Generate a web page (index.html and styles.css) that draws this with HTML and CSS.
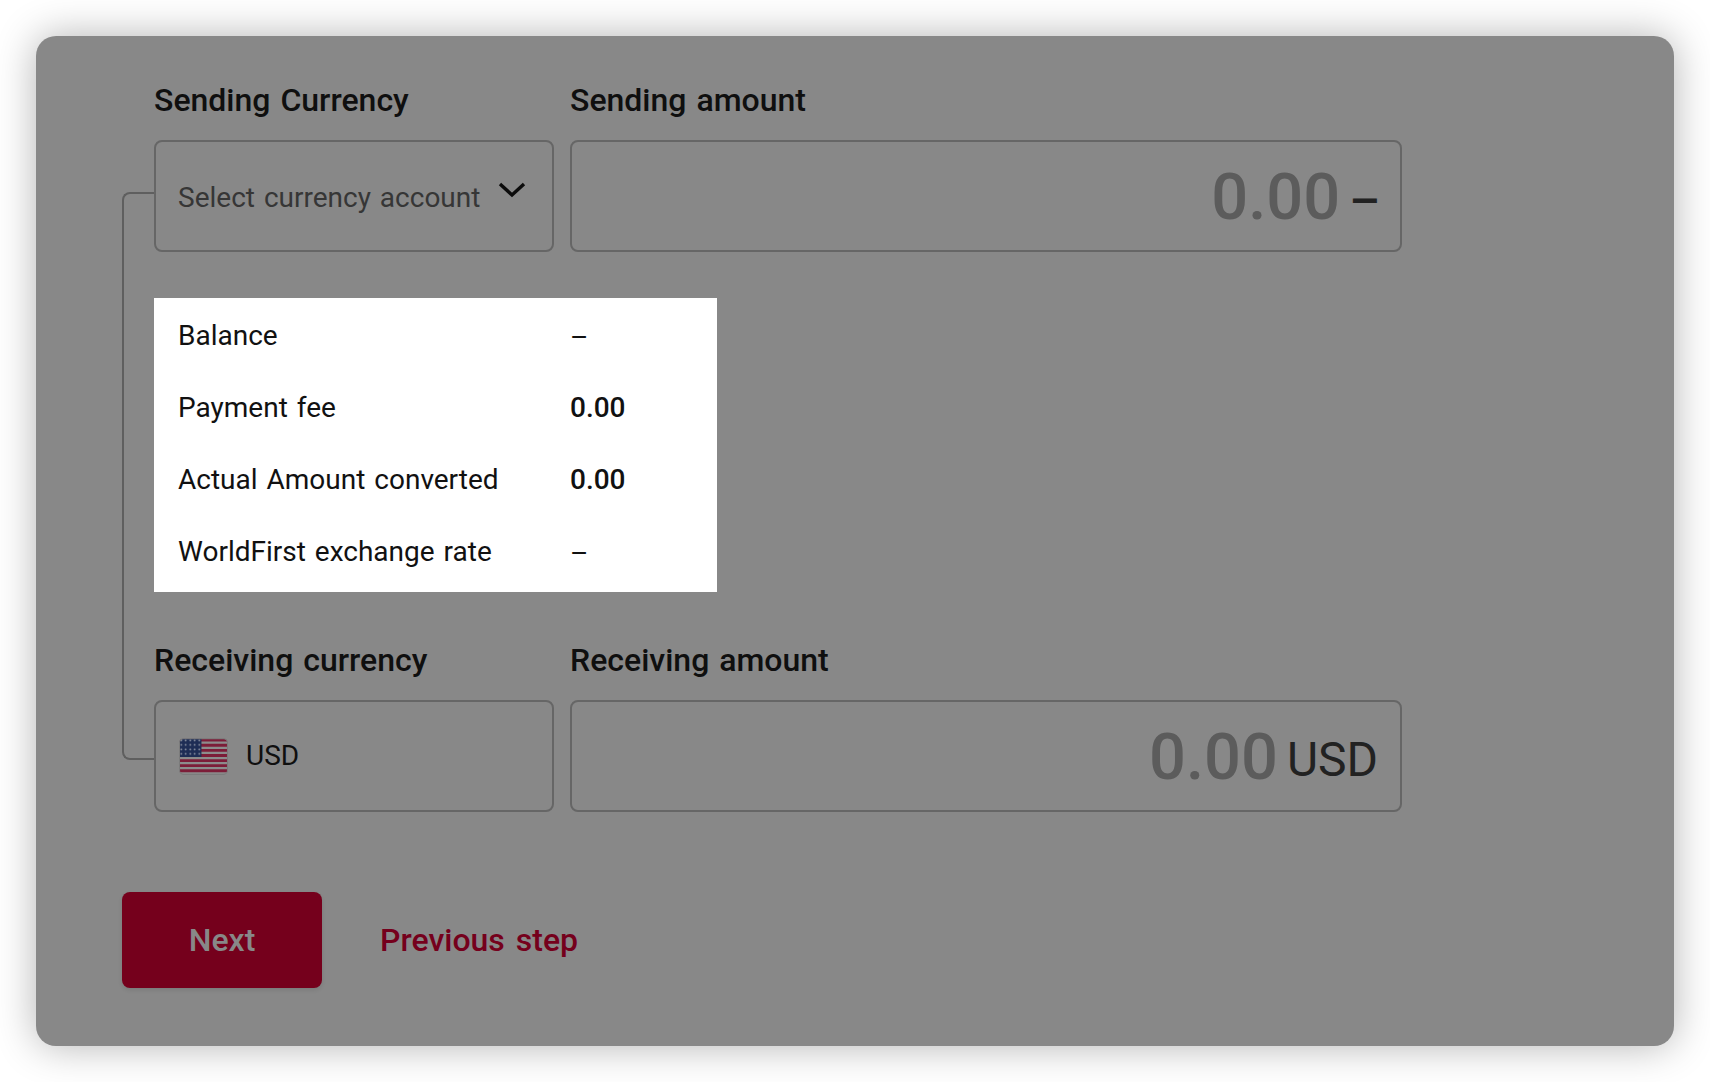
FILE: index.html
```html
<!DOCTYPE html>
<html lang="en">
<head>
    <meta charset="UTF-8">
    <title>Convert currency</title>
    <link rel="stylesheet" href="styles.css">
</head>
<body>
    <div class="window">
        <div class="connector"></div>

        <div class="field-row">
            <div class="field field-currency">
                <div class="field-label">Sending Currency</div>
                <div class="field-box select-box">
                    <span class="placeholder">Select currency account</span>
                    <svg class="chevron" width="28" height="16" viewBox="0 0 28 16">
                        <path d="M2 2 L14 13 L26 2" fill="none" stroke="#0c0c0c" stroke-width="3.4"/>
                    </svg>
                </div>
            </div>
            <div class="field field-amount">
                <div class="field-label">Sending amount</div>
                <div class="field-box amount-box">
                    <span class="amount">0.00</span>
                    <span class="unit unit-empty">–</span>
                </div>
            </div>
        </div>

        <div class="summary">
            <div class="summary-row"><span class="summary-label">Balance</span><span class="summary-empty">–</span></div>
            <div class="summary-row"><span class="summary-label">Payment fee</span><strong class="summary-value">0.00</strong></div>
            <div class="summary-row"><span class="summary-label">Actual Amount converted</span><strong class="summary-value">0.00</strong></div>
            <div class="summary-row"><span class="summary-label">WorldFirst exchange rate</span><span class="summary-empty">–</span></div>
        </div>

        <div class="field-row">
            <div class="field field-currency">
                <div class="field-label">Receiving currency</div>
                <div class="field-box select-box">
                    <svg class="flag" width="49" height="37" viewBox="0 0 48 36">
                        <defs>
                            <pattern id="stars" width="4.4" height="4.4" patternUnits="userSpaceOnUse">
                                <circle cx="2.2" cy="2.2" r="0.8" fill="#9aa0ad"/>
                            </pattern>
                            <clipPath id="flagClip"><rect x="0.5" y="0.5" width="47" height="35" rx="4"/></clipPath>
                        </defs>
                        <g clip-path="url(#flagClip)">
                            <rect width="48" height="36" fill="#8c8c8c"/>
                            <path d="M0 2H48M0 7H48M0 12H48M0 17H48M0 22H48M0 27H48M0 32H48" stroke="#7c1d38" stroke-width="2.8"/>
                            <rect width="22" height="18.5" fill="#1e2d55"/>
                            <rect width="22" height="18.5" fill="url(#stars)"/>
                        </g>
                        <rect x="0.5" y="0.5" width="47" height="35" rx="4" fill="none" stroke="#7b7b7b"/>
                    </svg>
                    <span class="currency-code">USD</span>
                </div>
            </div>
            <div class="field field-amount">
                <div class="field-label">Receiving amount</div>
                <div class="field-box amount-box">
                    <span class="amount">0.00</span>
                    <span class="unit">USD</span>
                </div>
            </div>
        </div>

        <div class="actions">
            <button class="btn-next">Next</button>
            <a class="btn-previous" href="#">Previous step</a>
        </div>
    </div>
</body>
</html>
```

FILE: styles.css
```css
body {
    margin: 0;
    background: #fff;
    font-family: Roboto, "Liberation Sans", sans-serif;
}

/* === Window === */
.window {
    position: relative;
    box-sizing: border-box;
    width: 1638px;
    height: 1010px;
    margin: 36px;
    padding: 46px 0 0 118px;
    background: #888;
    border-radius: 20px;
    box-shadow: 0 0 40px rgba(0, 0, 0, 0.3);
}

/* line joining the two currency boxes */
.connector {
    position: absolute;
    left: 86px;
    top: 156px;
    width: 32px;
    height: 568px;
    box-sizing: border-box;
    border: 2px solid #5f5f5f;
    border-right: none;
    border-radius: 8px 0 0 8px;
}

/* === Fields === */
.field-row {
    display: flex;
    gap: 16px;
}

.field-currency {
    width: 400px;
}

.field-amount {
    width: 832px;
}

.field-label {
    height: 36px;
    margin-top: -1px;
    margin-bottom: 22px;
    padding-top: 1px;
    font-size: 32px;
    line-height: 36px;
    font-weight: 500;
    color: #0f0f0f;
    word-spacing: 2px;
}

.field-box {
    display: flex;
    align-items: center;
    box-sizing: border-box;
    height: 112px;
    padding: 0 22px;
    border: 2px solid #666;
    border-radius: 8px;
}

.select-box {
    position: relative;
}

.placeholder {
    position: relative;
    top: 1px;
    font-size: 28px;
    color: #363636;
    word-spacing: 2px;
}

.chevron {
    position: absolute;
    left: 342px;
    top: 40px;
}

.flag {
    flex-shrink: 0;
    margin-left: 1px;
    margin-right: 18px;
}

.currency-code {
    position: relative;
    top: -1px;
    font-size: 28px;
    color: #0f0f0f;
}

.amount-box {
    justify-content: flex-end;
    gap: 9px;
}

.amount {
    position: relative;
    top: 1px;
    font-size: 65px;
    font-weight: 500;
    color: #5c5c5c;
}

.unit {
    position: relative;
    top: 3px;
    font-size: 48px;
    color: #222;
}

.unit-empty {
    top: 5px;
    margin-right: -2px;
    font-weight: 500;
}

/* === Summary panel === */
.summary {
    box-sizing: border-box;
    width: 563px;
    height: 294px;
    margin: 46px 0 50px;
    padding: 1px 24px;
    background: #fff;
}

.summary-row {
    display: flex;
    align-items: center;
    height: 72px;
    font-size: 28px;
    color: #111;
}

.summary-label {
    width: 392px;
    word-spacing: 2px;
}

.summary-value {
    font-weight: 500;
}

.summary-empty {
    position: relative;
    top: 2px;
    width: 16px;
}

/* === Actions === */
.actions {
    display: flex;
    align-items: center;
    gap: 58px;
    margin: 80px 0 0 -32px;
}

.btn-next {
    width: 200px;
    height: 96px;
    border: none;
    border-radius: 8px;
    background: #75001c;
    color: #888;
    font-family: inherit;
    font-size: 32px;
    font-weight: 500;
    box-shadow: 0 2px 4px rgba(0, 0, 0, 0.1);
}

.btn-previous {
    font-size: 32px;
    font-weight: 500;
    color: #75001c;
    text-decoration: none;
    word-spacing: 3px;
}
```
